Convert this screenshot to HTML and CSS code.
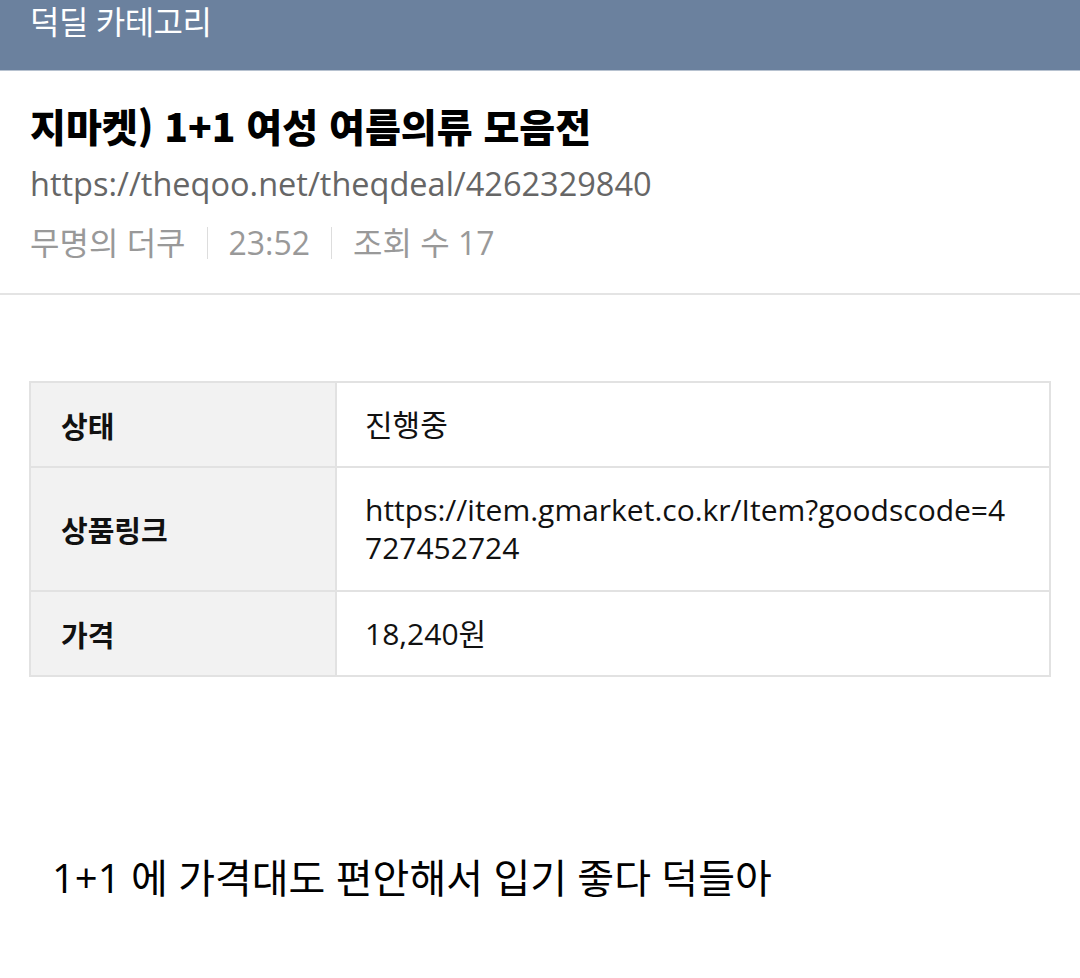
FILE: index.html
```html
<!DOCTYPE html>
<html lang="ko">
<head>
	<meta charset="UTF-8">
	<title>덕딜 카테고리</title>
	<link rel="stylesheet" href="styles.css">
</head>
<body>
	<div class="topbar">덕딜 카테고리</div>

	<div class="post_head">
		<h1 class="title">지마켓) 1+1 여성 여름의류 모음전</h1>
		<div class="link">https://theqoo.net/theqdeal/4262329840</div>
		<div class="meta">
			<span>무명의 더쿠</span>
			<span class="bar"></span>
			<span>23:52</span>
			<span class="bar"></span>
			<span>조회 수 17</span>
		</div>
	</div>

	<div class="post_body">
		<table class="deal">
			<tr>
				<th>상태</th>
				<td>진행중</td>
			</tr>
			<tr class="tall">
				<th>상품링크</th>
				<td class="url">https://item.gmarket.co.kr/Item?goodscode=4727452724</td>
			</tr>
			<tr>
				<th>가격</th>
				<td>18,240원</td>
			</tr>
		</table>

		<p class="memo">1+1 에 가격대도 편안해서 입기 좋다 덕들아</p>
	</div>
</body>
</html>
```

FILE: styles.css
```css
*{
	padding: 0;
	margin: 0;
}
body{
	font-family: "Open Sans", "Noto Sans CJK KR", sans-serif;
	color: #111;
	background: #fff;
	width: 1080px;
}
.topbar{
	height: 70px;
	background: #6b819e;
	border-bottom: 1px solid #b7c2d0;
	color: #fff;
	font-size: 32px;
	line-height: 44px;
	padding-left: 30px;
	letter-spacing: -0.5px;
}
.post_head{
	padding: 26px 30px 22px;
	border-bottom: 2px solid #e4e4e4;
}
.title{
	font-family: "Noto Sans CJK KR", sans-serif;
	font-size: 39px;
	font-weight: 900;
	line-height: 56px;
	color: #000;
}
.link{
	font-size: 32.5px;
	line-height: 62px;
	color: #666;
}
.meta{
	display: flex;
	align-items: center;
	font-size: 32px;
	line-height: 56px;
	color: #999;
}
.meta .bar{
	width: 1px;
	height: 32px;
	background: #ddd;
	margin: 0 21px;
}
.post_body{
	padding: 86px 29px 0;
}
.deal{
	width: 1022px;
	border-collapse: collapse;
	font-size: 30px;
}
.deal th,
.deal td{
	border: 2px solid #e2e2e2;
	height: 83px;
	text-align: left;
	vertical-align: middle;
}
.deal th{
	width: 274px;
	padding-left: 30px;
	background: #f2f2f2;
	font-family: "Noto Sans CJK KR", sans-serif;
	font-size: 29px;
	font-weight: bold;
	color: #111;
}
.deal td{
	padding: 0 30px 0 28px;
	line-height: 38px;
	color: #111;
}
.deal .tall td,
.deal .tall th{
	height: 122px;
}
.url{
	word-break: break-all;
}
.memo{
	margin: 173px 0 0 23px;
	font-size: 40px;
	line-height: 56px;
	color: #000;
}
```
